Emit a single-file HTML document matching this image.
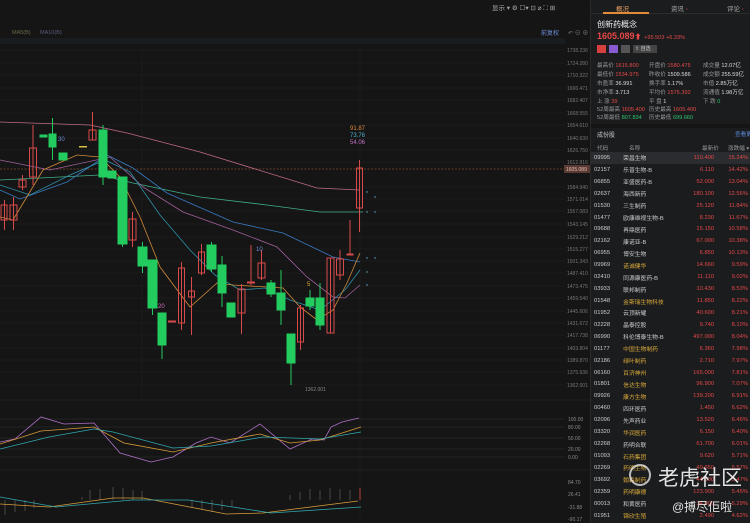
<!DOCTYPE html>
<html><head><meta charset="utf-8"><style>
*{margin:0;padding:0;box-sizing:border-box}
body{width:750px;height:523px;overflow:hidden;background:#151515;font-family:"Liberation Sans","Noto Sans CJK SC",sans-serif;position:relative;color:#ccc}
#chart{position:absolute;left:0;top:0}
#rp{position:absolute;left:590px;top:0;width:160px;height:523px;background:#1b1c1e;border-left:1px solid #2a2a2a;font-size:6px}
.tabs{height:14px;border-bottom:1px solid #2c2c2c;position:relative;font-size:6.5px;color:#aaa}
.tabs span{position:absolute;top:3px}
.st{position:absolute;font-size:5.6px;color:#999;white-space:nowrap}
.r{color:#e54848}.g{color:#2cc46a}.w{color:#ddd}.y{color:#d9a93a}
table{position:absolute;left:0;top:152px;width:160px;border-collapse:collapse;font-size:5.8px}
td{height:11.93px;padding:0 3px;white-space:nowrap;color:#ccc}
td.p,td.c{text-align:right;color:#e54848}
</style></head><body>
<svg id="chart" width="590" height="523" viewBox="0 0 590 523" font-family="Liberation Sans,Noto Sans CJK SC,sans-serif">
<rect width="590" height="523" fill="#151515"/>
<g stroke="#222" stroke-width="0.5">
<line x1="0" y1="50" x2="565" y2="50"/><line x1="0" y1="63" x2="565" y2="63"/><line x1="0" y1="75" x2="565" y2="75"/><line x1="0" y1="88" x2="565" y2="88"/><line x1="0" y1="100" x2="565" y2="100"/><line x1="0" y1="113" x2="565" y2="113"/><line x1="0" y1="125" x2="565" y2="125"/><line x1="0" y1="138" x2="565" y2="138"/><line x1="0" y1="150" x2="565" y2="150"/><line x1="0" y1="162" x2="565" y2="162"/><line x1="0" y1="187" x2="565" y2="187"/><line x1="0" y1="199" x2="565" y2="199"/><line x1="0" y1="211" x2="565" y2="211"/><line x1="0" y1="224" x2="565" y2="224"/><line x1="0" y1="237" x2="565" y2="237"/><line x1="0" y1="249" x2="565" y2="249"/><line x1="0" y1="261" x2="565" y2="261"/><line x1="0" y1="273" x2="565" y2="273"/><line x1="0" y1="286" x2="565" y2="286"/><line x1="0" y1="298" x2="565" y2="298"/><line x1="0" y1="311" x2="565" y2="311"/><line x1="0" y1="323" x2="565" y2="323"/><line x1="0" y1="335" x2="565" y2="335"/><line x1="0" y1="348" x2="565" y2="348"/><line x1="0" y1="360" x2="565" y2="360"/><line x1="0" y1="372" x2="565" y2="372"/><line x1="0" y1="385" x2="565" y2="385"/>
<line x1="142" y1="50" x2="142" y2="400"/><line x1="360" y1="50" x2="360" y2="523"/>
<line x1="0" y1="400" x2="590" y2="400" stroke="#2a2a2a"/><line x1="0" y1="470" x2="590" y2="470" stroke="#2a2a2a"/>
</g>
<rect x="0" y="38" width="565" height="6" fill="#1a1d20"/>
<text x="12" y="34" font-size="5.5" fill="#6e6a4a">MA5(B)</text><text x="40" y="34" font-size="5.5" fill="#5a5a7a">MA10(B)</text>
<text x="541" y="35" font-size="6" fill="#6f8fd8">前复权</text>
<text x="568" y="35" font-size="6" fill="#777">↶ ⊖ ⊕</text>
<text x="492" y="10" font-size="6.5" fill="#aaa">显示 ▾  ⚙  ☐▾   ⊡  ⌀  ⛶ ⊞</text>
<g font-size="5" fill="#777">
<text x="567" y="52">1738.236</text><text x="567" y="65">1724.280</text><text x="567" y="77">1710.322</text><text x="567" y="90">1696.471</text><text x="567" y="102">1682.407</text><text x="567" y="115">1668.555</text><text x="567" y="127">1654.610</text><text x="567" y="140">1640.639</text><text x="567" y="152">1626.750</text><text x="567" y="164">1612.816</text><text x="567" y="189">1584.940</text><text x="567" y="201">1571.014</text><text x="567" y="213">1557.083</text><text x="567" y="226">1543.145</text><text x="567" y="239">1529.212</text><text x="567" y="251">1515.277</text><text x="567" y="263">1501.343</text><text x="567" y="275">1487.410</text><text x="567" y="288">1473.475</text><text x="567" y="300">1459.540</text><text x="567" y="313">1445.606</text><text x="567" y="325">1431.672</text><text x="567" y="337">1417.738</text><text x="567" y="350">1403.804</text><text x="567" y="362">1389.870</text><text x="567" y="374">1375.936</text><text x="567" y="387">1362.001</text>
</g>
<line x1="0" y1="169" x2="565" y2="169" stroke="#b8623a" stroke-width="0.6" stroke-dasharray="2,1.5"/>
<rect x="564" y="165" width="26" height="8" fill="#5a3a34"/><text x="566" y="171" font-size="5" fill="#e8c0b0">1605.089</text>
<g fill="none" stroke-width="0.8">
<polyline stroke="#c06a8a" points="0,122 90,125 127,133 200,152 317,188 360,190"/>
<polyline stroke="#3fae8a" points="0,180 100,175 133,183 200,197 267,205 320,212 363,212"/>
<polyline stroke="#3a7ac0" points="0,190 20,199 67,182 107,155 133,168 167,193 233,222 283,233 333,257 360,262"/>
<polyline stroke="#a0609a" points="0,160 50,170 110,157 143,187 183,212 233,230 277,247 307,277 333,297 345,298 360,285"/>
<polyline stroke="#2e8fa8" points="0,185 30,195 70,175 105,160 130,172 160,215 190,250 215,275 240,290 265,288 290,300 320,310 345,290 360,270"/>
<polyline stroke="#d08a3a" points="0,217 13,220 43,170 77,155 100,157 120,177 140,217 160,267 190,307 217,283 233,285 267,287 283,288 300,307 317,320 333,310 347,283 360,253"/>
</g>
<g stroke-width="1">
<g stroke="#d94a4a" fill="none">
<line x1="4.5" y1="200" x2="4.5" y2="230"/><rect x="1" y="205" width="6" height="15"/>
<line x1="13.5" y1="197" x2="13.5" y2="230"/><rect x="10" y="205" width="7" height="15"/>
<line x1="22.5" y1="175" x2="22.5" y2="190"/><rect x="19" y="180" width="7" height="7"/>
<line x1="33" y1="125" x2="33" y2="185"/><rect x="29.5" y="148" width="7" height="29"/>
<line x1="92.5" y1="112" x2="92.5" y2="140"/><rect x="89" y="130" width="7" height="10"/>
<line x1="132.5" y1="212" x2="132.5" y2="247"/><rect x="129" y="219" width="7" height="21"/>
<rect x="168.5" y="321" width="7" height="1"/>
<line x1="181.5" y1="262" x2="181.5" y2="330"/><rect x="178.5" y="268" width="6" height="55"/>
<line x1="191.5" y1="277" x2="191.5" y2="335"/><rect x="188.5" y="291" width="6" height="6"/>
<line x1="201.5" y1="244" x2="201.5" y2="275"/><rect x="198.5" y="252" width="6" height="21"/>
<line x1="241.5" y1="284" x2="241.5" y2="334"/><rect x="238" y="289" width="7" height="24"/>
<line x1="251" y1="245" x2="251" y2="285"/><rect x="247.5" y="282" width="7" height="1"/>
<line x1="261.5" y1="250" x2="261.5" y2="280"/><rect x="258" y="263" width="7" height="15"/>
<line x1="300.5" y1="305" x2="300.5" y2="350"/><rect x="297.5" y="308" width="6" height="34"/>
<line x1="330.5" y1="258" x2="330.5" y2="333"/><rect x="327" y="258" width="7" height="75"/>
<line x1="340" y1="250" x2="340" y2="280"/><rect x="336.5" y="259" width="7" height="16"/>
<line x1="350" y1="220" x2="350" y2="255"/><rect x="347" y="254" width="6" height="1"/>
<line x1="359.5" y1="160" x2="359.5" y2="232"/><rect x="356.5" y="168" width="6" height="40"/>
</g>
<g stroke="#22cc5e" fill="#22cc5e">
<rect x="40" y="135" width="7" height="2"/>
<line x1="52.5" y1="118" x2="52.5" y2="160"/><rect x="49" y="134" width="7" height="13"/>
<rect x="59" y="153" width="8" height="7"/>
<line x1="103" y1="125" x2="103" y2="185"/><rect x="99" y="130" width="8" height="47"/>
<rect x="108" y="171" width="8" height="7"/>
<line x1="122.5" y1="177" x2="122.5" y2="247"/><rect x="118" y="177" width="9" height="67"/>
<line x1="142.5" y1="242" x2="142.5" y2="273"/><rect x="138" y="247" width="9" height="19"/>
<line x1="152.5" y1="260" x2="152.5" y2="315"/><rect x="148" y="260" width="9" height="48"/>
<line x1="162" y1="313" x2="162" y2="359"/><rect x="158" y="313" width="8" height="32"/>
<line x1="211.5" y1="242" x2="211.5" y2="272"/><rect x="207" y="245" width="9" height="24"/>
<line x1="222" y1="256" x2="222" y2="307"/><rect x="218" y="265" width="8" height="28"/>
<rect x="227" y="303" width="8" height="14"/>
<line x1="271" y1="280" x2="271" y2="297"/><rect x="267" y="283" width="8" height="11"/>
<line x1="281" y1="270" x2="281" y2="325"/><rect x="277" y="293" width="8" height="17"/>
<line x1="291" y1="334" x2="291" y2="385"/><rect x="287" y="334" width="8" height="29"/>
<line x1="310" y1="290" x2="310" y2="310"/><rect x="306" y="298" width="8" height="8"/>
<line x1="320" y1="283" x2="320" y2="330"/><rect x="316" y="298" width="8" height="27"/>
</g>
<rect x="79" y="146" width="8" height="1.5" fill="#d9c040"/>
</g>
<g font-size="6">
<text x="58" y="141" fill="#6a8ad8">30</text><text x="158" y="308" fill="#d070c0">20</text><text x="256" y="251" fill="#6a8ad8">10</text><text x="307" y="286" fill="#d9a93a">5</text>
<text x="350" y="130" fill="#d98a3a">91.87</text><text x="350" y="137" fill="#4ab0c8">73.76</text><text x="350" y="144" fill="#c070c0">54.06</text>
<text x="305" y="391" fill="#888" font-size="5">1362.001</text>
</g>
<g fill="#6ab0d8"><circle cx="367" cy="192" r="0.7"/><circle cx="375" cy="197" r="0.7"/><circle cx="367" cy="212" r="0.7"/><circle cx="375" cy="212" r="0.7"/><circle cx="367" cy="258" r="0.7"/><circle cx="375" cy="258" r="0.7"/><circle cx="367" cy="272" r="0.7"/><circle cx="367" cy="285" r="0.7"/></g>
<g stroke="#333" stroke-width="0.6"><line x1="0" y1="419" x2="565" y2="419"/><line x1="0" y1="427" x2="565" y2="427"/><line x1="0" y1="438" x2="565" y2="438"/><line x1="0" y1="449" x2="565" y2="449"/><line x1="0" y1="457" x2="565" y2="457"/></g>
<g font-size="5" fill="#888"><text x="568" y="421">100.00</text><text x="568" y="429">80.00</text><text x="568" y="440">50.00</text><text x="568" y="451">20.00</text><text x="568" y="459">0.00</text>
<text x="568" y="484">84.70</text><text x="568" y="496">26.41</text><text x="568" y="509">-31.88</text><text x="568" y="521">-90.17</text></g>
<g fill="none" stroke-width="0.8">
<polyline stroke="#b070c8" points="0,442 15,439 41,417 64,424 94,423 120,453 151,462 173,457 196,443 211,437 230,443 260,424 290,449 312,439 324,440 331,427 342,422 359,418"/>
<polyline stroke="#d89a3a" points="0,444 41,431 94,427 124,443 173,452 211,443 260,434 290,443 320,440 361,427"/>
<polyline stroke="#30a8b0" points="0,449 49,437 94,429 113,432 173,448 211,446 263,437 320,439 361,432"/>
<polyline stroke="#d89a3a" points="0,504 49,507 113,498 143,498 226,514 263,513 358,501"/>
<polyline stroke="#30a8b0" points="0,497 56,507 132,500 188,500 271,513 361,507"/>
</g>
<g stroke="#bbb" stroke-width="0.5" opacity="0.6">
<line x1="5" y1="500" x2="5" y2="515"/><line x1="15" y1="500" x2="15" y2="512"/><line x1="25" y1="500" x2="25" y2="511"/><line x1="34" y1="500" x2="34" y2="508"/><line x1="82" y1="497" x2="82" y2="500"/><line x1="90" y1="490" x2="90" y2="500"/><line x1="100" y1="489" x2="100" y2="500"/><line x1="113" y1="487" x2="113" y2="500"/><line x1="123" y1="488" x2="123" y2="500"/><line x1="133" y1="490" x2="133" y2="500"/><line x1="142" y1="491" x2="142" y2="500"/><line x1="192" y1="500" x2="192" y2="508"/><line x1="202" y1="500" x2="202" y2="510"/><line x1="212" y1="500" x2="212" y2="512"/><line x1="222" y1="500" x2="222" y2="510"/><line x1="232" y1="500" x2="232" y2="506"/><line x1="290" y1="495" x2="290" y2="500"/><line x1="300" y1="492" x2="300" y2="500"/><line x1="310" y1="489" x2="310" y2="500"/><line x1="320" y1="490" x2="320" y2="500"/><line x1="330" y1="488" x2="330" y2="500"/><line x1="340" y1="489" x2="340" y2="500"/><line x1="350" y1="490" x2="350" y2="500"/></g>
<line x1="360" y1="488" x2="360" y2="500" stroke="#e04848" stroke-width="0.8"/>
</svg>
<div id="rp">
<div class="tabs"><span style="left:25px;color:#e8a060">概况</span><span style="left:80px">资讯 <b style="color:#e54848">·</b></span><span style="left:136px">评论 <b style="color:#e54848">·</b></span>
<div style="position:absolute;left:12px;top:12px;width:46px;height:1.5px;background:#e08a3a"></div></div>
<div style="position:absolute;left:6px;top:19px;font-size:8px;color:#eee">创新药概念</div>
<div style="position:absolute;left:6px;top:31px;font-size:9px;color:#e54848;font-weight:bold">1605.089<span style="font-size:7px">⬆</span> <span style="font-size:5.6px;font-weight:normal">+95.503 +6.33%</span></div>
<div style="position:absolute;left:6px;top:45px;width:9px;height:8px;background:#d84040"></div>
<div style="position:absolute;left:18px;top:45px;width:9px;height:8px;background:#8a5ad0"></div>
<div style="position:absolute;left:30px;top:45px;width:9px;height:8px;background:#555"></div>
<div style="position:absolute;left:42px;top:45px;width:24px;height:8px;background:#444;font-size:5px;color:#ccc;padding-left:2px;line-height:8px">⇪ 自选</div>
<div class="st" style="left:6px;top:61px">最高价 <span class="r">1615.800</span></div><div class="st" style="left:58px;top:61px">开盘价 <span class="r">1580.475</span></div><div class="st" style="left:112px;top:61px">成交量 <span class="w">12.07亿</span></div>
<div class="st" style="left:6px;top:70px">最低价 <span class="r">1534.975</span></div><div class="st" style="left:58px;top:70px">昨收价 <span class="w">1509.586</span></div><div class="st" style="left:112px;top:70px">成交额 <span class="w">255.59亿</span></div>
<div class="st" style="left:6px;top:79px">市盈率 <span class="w">36.991</span></div><div class="st" style="left:58px;top:79px">换手率 <span class="w">1.17%</span></div><div class="st" style="left:112px;top:79px">市值 <span class="w">2.85万亿</span></div>
<div class="st" style="left:6px;top:88px">市净率 <span class="w">3.713</span></div><div class="st" style="left:58px;top:88px">平均价 <span class="r">1575.392</span></div><div class="st" style="left:112px;top:88px">流通值 <span class="w">1.98万亿</span></div>
<div class="st" style="left:6px;top:97px">上 涨 <span class="r">39</span></div><div class="st" style="left:58px;top:97px">平 盘 <span class="w">1</span></div><div class="st" style="left:112px;top:97px">下 跌 <span class="g">0</span></div>
<div class="st" style="left:6px;top:105px">52周最高 <span class="r">1605.400</span></div><div class="st" style="left:58px;top:105px">历史最高 <span class="r">1605.400</span></div>
<div class="st" style="left:6px;top:113px">52周最低 <span class="g">807.834</span></div><div class="st" style="left:58px;top:113px">历史最低 <span class="g">699.660</span></div>
<div style="position:absolute;left:0;top:124px;width:160px;height:4px;background:#151515"></div>
<div class="st" style="left:6px;top:130px;color:#ccc;font-size:6px">成份股</div><div class="st" style="left:144px;top:130px;color:#5a8ae0">查看更多</div>
<div class="st" style="left:6px;top:144px">代码</div><div class="st" style="left:38px;top:144px">名称</div><div class="st" style="left:111px;top:144px">最新价</div><div class="st" style="left:137px;top:144px">涨跌幅 ▾</div>
<table>
<tr style="background:#2b2c30"><td>09995</td><td>荣昌生物</td><td class="p">110.400</td><td class="c">15.24%</td></tr>
<tr><td>02157</td><td>乐普生物-B</td><td class="p">6.110</td><td class="c">14.42%</td></tr>
<tr><td>06855</td><td>亚盛医药-B</td><td class="p">52.000</td><td class="c">13.04%</td></tr>
<tr><td>02637</td><td>海西新药</td><td class="p">180.100</td><td class="c">12.56%</td></tr>
<tr><td>01530</td><td>三生制药</td><td class="p">25.120</td><td class="c">11.84%</td></tr>
<tr><td>01477</td><td>欧康维视生物-B</td><td class="p">8.230</td><td class="c">11.67%</td></tr>
<tr><td>09688</td><td>再鼎医药</td><td class="p">15.150</td><td class="c">10.58%</td></tr>
<tr><td>02162</td><td>康诺亚-B</td><td class="p">67.000</td><td class="c">10.38%</td></tr>
<tr><td>06955</td><td>博安生物</td><td class="p">6.850</td><td class="c">10.13%</td></tr>
<tr><td>09969</td><td class="y">诺诚健华</td><td class="p">14.660</td><td class="c">9.59%</td></tr>
<tr><td>02410</td><td>同源康医药-B</td><td class="p">11.110</td><td class="c">9.02%</td></tr>
<tr><td>03933</td><td>联邦制药</td><td class="p">10.430</td><td class="c">8.53%</td></tr>
<tr><td>01548</td><td class="y">金斯瑞生物科技</td><td class="p">11.850</td><td class="c">8.22%</td></tr>
<tr><td>01952</td><td>云顶新耀</td><td class="p">40.600</td><td class="c">8.21%</td></tr>
<tr><td>02228</td><td>晶泰控股</td><td class="p">9.740</td><td class="c">8.10%</td></tr>
<tr><td>06990</td><td>科伦博泰生物-B</td><td class="p">497.000</td><td class="c">8.04%</td></tr>
<tr><td>01177</td><td class="y">中国生物制药</td><td class="p">6.360</td><td class="c">7.98%</td></tr>
<tr><td>02186</td><td class="y">绿叶制药</td><td class="p">2.710</td><td class="c">7.97%</td></tr>
<tr><td>06160</td><td class="y">百济神州</td><td class="p">165.000</td><td class="c">7.81%</td></tr>
<tr><td>01801</td><td class="y">信达生物</td><td class="p">96.900</td><td class="c">7.07%</td></tr>
<tr><td>09926</td><td class="y">康方生物</td><td class="p">139.200</td><td class="c">6.91%</td></tr>
<tr><td>00460</td><td>四环医药</td><td class="p">1.450</td><td class="c">6.62%</td></tr>
<tr><td>02096</td><td>先声药业</td><td class="p">13.520</td><td class="c">6.46%</td></tr>
<tr><td>03320</td><td class="y">华润医药</td><td class="p">6.150</td><td class="c">6.40%</td></tr>
<tr><td>02268</td><td>药明合联</td><td class="p">61.700</td><td class="c">6.01%</td></tr>
<tr><td>01093</td><td class="y">石药集团</td><td class="p">9.620</td><td class="c">5.71%</td></tr>
<tr><td>02269</td><td class="y">药明生物</td><td class="p">49.950</td><td class="c">5.57%</td></tr>
<tr><td>03692</td><td class="y">翰森制药</td><td class="p">44.500</td><td class="c">5.47%</td></tr>
<tr><td>02359</td><td class="y">药明康德</td><td class="p">123.900</td><td class="c">5.45%</td></tr>
<tr><td>00013</td><td>和黄医药</td><td class="p">34.000</td><td class="c">5.29%</td></tr>
<tr><td>01951</td><td class="y">锦欣生殖</td><td class="p">2.490</td><td class="c">4.62%</td></tr>
</table>
</div>
<div style="position:absolute;left:629px;top:464px;width:22px;height:22px;border-radius:50%;border:2px solid rgba(255,255,255,0.7)"></div>
<div style="position:absolute;left:658px;top:462px;font-size:21px;color:rgba(255,255,255,0.88);letter-spacing:0px">老虎社区</div>
<div style="position:absolute;left:672px;top:498px;font-size:12px;color:rgba(255,255,255,0.88)">@搏尽佢啦</div>
</body></html>
